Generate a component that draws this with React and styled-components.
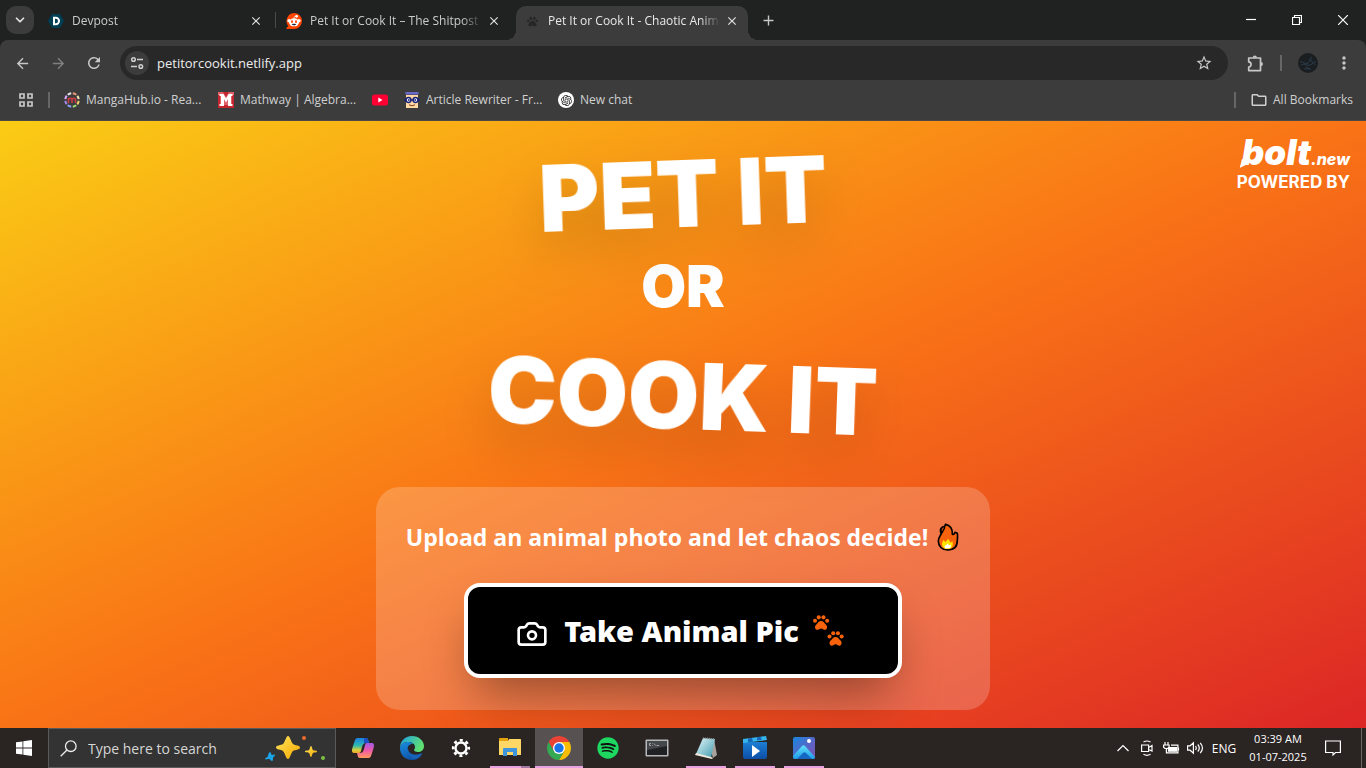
import styled, { createGlobalStyle } from "styled-components"
import {
  MdAdd,
  MdArrowBack,
  MdArrowForward,
  MdClose,
  MdMoreVert,
  MdOutlineFolder,
  MdRefresh,
  MdStarBorder,
} from "react-icons/md"
import { FaPaw, FaSpotify } from "react-icons/fa"
import { RiOpenaiFill } from "react-icons/ri"
import { Camera, ChevronDown } from "lucide-react"

const colors = {
  strip: "#1f2221",
  toolbar: "#3c3c3c",
  omnibox: "#282828",
  icon: "#c7c7c7",
  text: "#e3e3e3",
  divider: "#666666",
  taskbar: "#2a2423",
  underline: "#e7a1e0",
}

const GlobalStyle = createGlobalStyle`
  * {
    box-sizing: border-box;
  }
  body {
    margin: 0;
    font-family: "Open Sans", "Noto Sans", sans-serif;
    font-size: 12px;
  }
  button, input {
    font: inherit;
    color: inherit;
    background: none;
    border: none;
    padding: 0;
    margin: 0;
  }
  a {
    color: inherit;
    text-decoration: none;
  }
  svg {
    display: block;
    flex-shrink: 0;
  }
`

const Screen = styled.div`
  display: flex;
  flex-direction: column;
  min-height: 100vh;
`

/* ---------- browser ---------- */

const TabStrip = styled.div`
  display: flex;
  align-items: flex-end;
  height: 40px;
  padding-left: 6px;
  background: ${colors.strip};
  color: ${colors.text};
`

const TabSearch = styled.button`
  display: flex;
  align-items: center;
  justify-content: center;
  width: 28px;
  height: 28px;
  margin: 0 6px 6px 0;
  border-radius: 10px;
  background: ${colors.toolbar};
`

const TabItem = styled.div`
  position: relative;
  display: flex;
  align-items: center;
  width: 232px;
  height: 34px;
  padding: 0 8px 4px;
  border-radius: 10px 10px 0 0;
  background: ${(props) => (props.$active ? colors.toolbar : "transparent")};

  &::before,
  &::after {
    content: "";
    display: ${(props) => (props.$active ? "block" : "none")};
    position: absolute;
    bottom: 0;
    width: 10px;
    height: 10px;
  }
  &::before {
    left: -10px;
    background: radial-gradient(circle at 0 0, transparent 10px, ${colors.toolbar} 10px);
  }
  &::after {
    right: -10px;
    background: radial-gradient(circle at 100% 0, transparent 10px, ${colors.toolbar} 10px);
  }
`

const Favicon = styled.span`
  display: flex;
  align-items: center;
  justify-content: center;
  width: 16px;
  height: 16px;
`

const TabTitle = styled.span`
  flex: 1;
  margin: 0 4px 0 8px;
  line-height: 20px;
  white-space: nowrap;
  overflow: hidden;
  color: ${(props) => (props.$active ? "#e8e8e8" : "#c9cbca")};
  mask-image: linear-gradient(to right, #000 calc(100% - 20px), transparent);
`

const TabClose = styled.button`
  display: flex;
  align-items: center;
  justify-content: center;
  width: 16px;
  height: 16px;
`

const TabGap = styled.span`
  display: flex;
  justify-content: center;
  align-items: center;
  width: 6px;
  height: 40px;

  &::before {
    content: "";
    width: 1px;
    height: 16px;
    background: ${(props) => (props.$line ? "#4a4c4b" : "transparent")};
  }
`

const NewTab = styled.button`
  display: flex;
  align-items: center;
  justify-content: center;
  width: 28px;
  height: 28px;
  margin: 0 0 6px 6px;
  color: ${colors.icon};
`

const WindowButtons = styled.div`
  display: flex;
  margin-left: auto;
  height: 40px;
`

const WindowButton = styled.button`
  display: flex;
  align-items: center;
  justify-content: center;
  width: 46px;
  color: #fff;
`

const ToolbarWrap = styled.div`
  background: ${colors.strip};
`

const Toolbar = styled.div`
  display: flex;
  align-items: center;
  height: 46px;
  padding: 0 8px;
  border-radius: 8px 8px 0 0;
  background: ${colors.toolbar};
  color: ${colors.icon};
`

const ToolButton = styled.button`
  display: flex;
  align-items: center;
  justify-content: center;
  width: 28px;
  height: 28px;
  margin-right: ${(props) => props.$gap ?? 8}px;
  color: ${(props) => (props.$dim ? "#808080" : colors.icon)};
`

const Omnibox = styled.div`
  flex: 1;
  display: flex;
  align-items: center;
  height: 34px;
  margin: 0 12px 0 4px;
  padding: 0 10px 0 5px;
  border-radius: 17px;
  background: ${colors.omnibox};
`

const SiteInfo = styled.button`
  display: flex;
  align-items: center;
  justify-content: center;
  width: 24px;
  height: 24px;
  border-radius: 50%;
  background: ${colors.toolbar};
`

const UrlInput = styled.input`
  flex: 1;
  min-width: 0;
  margin: 0 8px;
  font-size: 13px;
  color: #ececec;
  outline: none;
`

const Divider = styled.span`
  width: 2px;
  height: 16px;
  background: ${colors.divider};
`

const Profile = styled.button`
  margin: 0 12px 0 16px;
`

const BookmarkBar = styled.nav`
  display: flex;
  align-items: center;
  height: 35px;
  padding: 0 13px 6px 18px;
  border-bottom: 1px solid #4b4845;
  background: ${colors.toolbar};
  color: #cfd0d0;
`

const BookmarkList = styled.div`
  flex: 1;
  display: flex;
  margin-left: 14px;
  min-width: 0;
  overflow: hidden;
`

const BookmarkLink = styled.a`
  display: flex;
  align-items: center;
  gap: 6px;
  margin-right: ${(props) => props.$gap ?? 20}px;
  white-space: nowrap;
`

const BookmarkLabel = styled.span`
  width: 112px;
  line-height: 20px;
`

const AllBookmarks = styled.button`
  display: flex;
  align-items: center;
  gap: 5px;
  margin-left: 14px;
  line-height: 20px;
`

const AppsButton = styled.button`
  margin-right: 14px;
`

/* ---------- web page ---------- */

const Page = styled.main`
  position: relative;
  flex: 1;
  display: flex;
  flex-direction: column;
  align-items: center;
  padding: 25px 16px 18px;
  overflow: hidden;
  background: linear-gradient(to bottom right, #facc15, #f97316, #dc2626);
  color: #fff;
`

const Title = styled.h1`
  display: flex;
  flex-direction: column;
  align-items: center;
  margin: 0 0 43px;
  font-family: Inter, "Open Sans", sans-serif;
  font-weight: 900;
  font-size: 92px;
  line-height: 96px;
`

const TitleLine = styled.span`
  transform: rotate(${(props) => props.$angle}deg);
  filter: drop-shadow(0 25px 25px rgba(0, 0, 0, 0.15));
`

const TitleOr = styled.span`
  margin: 14px 0 32px;
  font-size: 58px;
  line-height: 60px;
`

const Card = styled.section`
  display: flex;
  flex-direction: column;
  align-items: center;
  gap: 28px;
  width: 100%;
  max-width: 614px;
  padding: 32px;
  border-radius: 24px;
  background: rgba(255, 255, 255, 0.2);
`

const CardText = styled.p`
  display: flex;
  align-items: center;
  gap: 8px;
  margin: 0;
  font-size: 23px;
  line-height: 36px;
  font-weight: 700;
  white-space: nowrap;
`

const UploadButton = styled.button`
  display: flex;
  align-items: flex-end;
  padding: 24px 54px 24px 48px;
  border: 4px solid #fff;
  border-radius: 16px;
  background: #000;
  box-shadow: 0 25px 50px -12px rgba(0, 0, 0, 0.4);
  font-family: "Noto Sans", "Open Sans", sans-serif;
  font-size: 29px;
  line-height: 39px;
  font-weight: 900;
  white-space: nowrap;
`

const UploadLabel = styled.span`
  margin: 0 14px 0 16px;
`

const BoltBadge = styled.a`
  position: absolute;
  top: 15px;
  right: 16px;
  display: flex;
  flex-direction: column;
  align-items: flex-end;
  gap: 4px;
  font-family: Inter, "Open Sans", sans-serif;
  font-weight: 700;
  font-size: 17px;
  line-height: 20px;
`

const BoltLogo = styled.span`
  position: relative;
  display: flex;
  align-items: baseline;
  height: 32px;
  font-style: italic;
  font-weight: 900;
  font-size: 35px;
  line-height: 32px;

  /* pointed foot of the b */
  &::before {
    content: "";
    position: absolute;
    left: -2px;
    bottom: 0;
    width: 11px;
    height: 9px;
    background: #fff;
    clip-path: polygon(20% 0, 100% 40%, 0 100%);
  }
`

const BoltSuffix = styled.span`
  font-size: 16px;
  font-weight: 800;
`

/* ---------- taskbar ---------- */

const Taskbar = styled.footer`
  display: flex;
  height: 40px;
  background: ${colors.taskbar};
  color: #fff;
`

const StartButton = styled.button`
  display: flex;
  align-items: center;
  justify-content: center;
  width: 48px;
`

const SearchBox = styled.label`
  display: flex;
  align-items: center;
  width: 288px;
  margin-right: 3px;
  padding: 0 8px 0 11px;
  border: 1px solid #5c5a59;
  background: #333333;
`

const SearchInput = styled.input`
  flex: 1;
  min-width: 0;
  margin-left: 11px;
  font-size: 14px;
  outline: none;

  &::placeholder {
    color: #d6d6d6;
    opacity: 1;
  }
`

const TaskButton = styled.button`
  display: flex;
  flex-direction: column;
  align-items: center;
  width: 48px;
  margin-right: 1px;
  padding-top: 8px;
  background: ${(props) => (props.$active ? "#575251" : "transparent")};

  &::after {
    content: "";
    width: ${(props) => (props.$active ? 48 : 40)}px;
    height: 2px;
    margin-top: auto;
    background: ${(props) =>
      props.$stacked
        ? `linear-gradient(to right, ${colors.underline} 31px, #a477a0 31px)`
        : props.$open
          ? colors.underline
          : "transparent"};
  }
`

const Tray = styled.div`
  display: flex;
  align-items: center;
  margin-left: auto;
  padding-right: 4px;
`

const TrayButton = styled.button`
  display: flex;
  align-items: center;
  justify-content: center;
  width: ${(props) => props.$width ?? 24}px;
  height: 40px;
`

const Clock = styled.time`
  width: 74px;
  font-size: 11px;
  line-height: 18px;
  text-align: center;
`

const ShowDesktop = styled.button`
  width: 1px;
  height: 40px;
  margin-left: 10px;
  background: #6b6766;
`

/* ---------- icons ---------- */

const DevpostIcon = () => (
  <svg width="16" height="16" viewBox="0 0 16 16">
    <path d="M4 1h8l4 7-4 7H4L0 8z" fill="#003e54" />
    <path d="M6 4.8h1.8a3.2 3.2 0 0 1 0 6.4H6z" fill="none" stroke="#fff" strokeWidth="2" />
  </svg>
)

const RedditIcon = () => (
  <svg width="16" height="16" viewBox="0 0 48 48">
    <path d="M24 0a24 24 0 1 1 0 48H3c-2 0-3-2-1-4l5-5A24 24 0 0 1 24 0z" fill="#ff4500" />
    <circle cx="9" cy="23" r="5" fill="#fff" />
    <circle cx="39" cy="23" r="5" fill="#fff" />
    <circle cx="32" cy="10" r="4" fill="#fff" />
    <path d="M24 17c0-6 2-8 7-7" fill="none" stroke="#fff" strokeWidth="2.5" />
    <ellipse cx="24" cy="28" rx="15" ry="12" fill="#fff" />
    <ellipse cx="18" cy="26" rx="3" ry="4" fill="#ff4500" />
    <ellipse cx="30" cy="26" rx="3" ry="4" fill="#ff4500" />
    <path d="M17 33q7-2 14 0c-2 5-12 5-14 0z" fill="#223" />
  </svg>
)

const TuneIcon = () => (
  <svg width="14" height="14" viewBox="0 0 14 14" fill="none" stroke="#d0d0d0" strokeWidth="1.5">
    <circle cx="3.5" cy="3.5" r="1.8" />
    <path d="M7 3.5h6M1 10.5h6" />
    <circle cx="10.8" cy="10.5" r="1.8" />
  </svg>
)

const PuzzleIcon = () => (
  <svg width="19" height="19" viewBox="-1 0 18 18">
    <path
      d="M2.500 3.800h11.200v11.900H2.500v-3.400c3-.3 3-4.500 0-4.800z"
      fill="none"
      stroke={colors.icon}
      strokeWidth="1.6"
      strokeLinejoin="round"
    />
    <path d="M6.300 3.500a2 2 0 0 1 4 0zM14 7.500a2 2 0 0 1 0 4z" fill={colors.icon} />
  </svg>
)

const ProfileIcon = () => (
  <svg width="20" height="20" viewBox="0 0 20 20">
    <circle cx="10" cy="10" r="10" fill="#1b1e21" />
    <path
      d="M2 9c3-1 5 3 8 1s1-5 4-6M3 12c4-2 6 1 9 0s4-4 6-3M8 13c1 3 3 2 5 4M13 6c-1 3 3 3 4 6M6 16c2-1 4 1 6-1"
      fill="none"
      stroke="#2f4257"
      strokeWidth="0.8"
    />
  </svg>
)

const AppsIcon = () => (
  <svg width="16" height="16" viewBox="0 0 16 16" fill="none" stroke={colors.icon} strokeWidth="1.7">
    <path d="M2 2h4v4H2zM10 2h4v4h-4zM2 10h4v4H2zM10 10h4v4h-4z" />
  </svg>
)

const MangaIcon = () => (
  <svg width="16" height="16" viewBox="0 0 16 16" fill="none">
    <g strokeWidth="2">
      <path d="M8.800 1.300a7 7 0 0 1 3.500 1.400" stroke="#e9967a" />
      <path d="M13.300 3.800a7 7 0 0 1 1.400 3.400" stroke="#f2e6b0" />
      <path d="M14.700 8.800a7 7 0 0 1-1.400 3.500" stroke="#f0d070" />
      <path d="M12.200 13.300a7 7 0 0 1-3.400 1.400" stroke="#9fe07c" />
      <path d="M7.200 14.700a7 7 0 0 1-3.500-1.400" stroke="#8ea5ff" />
      <path d="M2.700 12.200a7 7 0 0 1-1.400-3.400" stroke="#a48bef" />
      <path d="M1.300 7.200a7 7 0 0 1 1.400-3.500" stroke="#d9a6ff" />
      <path d="M3.800 2.700a7 7 0 0 1 3.400-1.400" stroke="#e6e6e6" />
    </g>
    <path d="M4.500 11V6M4.500 7.500c0-1.800 3.500-1.800 3.500 0V11M8 7.500c0-1.800 3.500-1.800 3.500 0V11" stroke="#d23c46" strokeWidth="1.5" />
  </svg>
)

const MathwayIcon = () => (
  <svg width="16" height="16" viewBox="0 0 16 16">
    <rect width="16" height="16" fill="#c4252f" />
    <path d="M0 0h5l3 5 3-5h5v3h-2v10H2V3H0z" fill="#e06068" />
    <path d="M1.500 2h4L8 6.500 10.500 2h4v2H13v8h1.500v2H10V7L8 10.500 6 7v7H1.500v-2H3V4H1.500z" fill="#fff" />
  </svg>
)

const YoutubeIcon = () => (
  <svg width="16" height="16" viewBox="0 0 16 16">
    <rect y="2.5" width="16" height="11" rx="2.5" fill="#ff0033" />
    <path d="M6.300 5.500v5l4.200-2.500z" fill="#fff" />
  </svg>
)

const RewriterIcon = () => (
  <svg width="16" height="16" viewBox="0 0 16 16">
    <path d="M2 3h12v13H2z" fill="#ffd9a3" />
    <path d="M1.500 0h13v2.500h-13z" fill="#6a68c9" />
    <path d="M0 8h16" stroke="#1b2377" strokeWidth="1.5" />
    <circle cx="4.5" cy="8" r="2.4" fill="#fff" stroke="#1b2377" strokeWidth="1.5" />
    <circle cx="11.5" cy="8" r="2.4" fill="#fff" stroke="#1b2377" strokeWidth="1.5" />
    <circle cx="4.8" cy="8" r="0.9" fill="#1b2377" />
    <circle cx="11.2" cy="8" r="0.9" fill="#1b2377" />
    <path d="M5 12.800q3 2 6 0" fill="none" stroke="#7a3b20" />
  </svg>
)

const ChatIconBox = styled.span`
  display: flex;
  align-items: center;
  justify-content: center;
  width: 16px;
  height: 16px;
  border-radius: 50%;
  background: #fff;
  color: #222;
`

const FlameIcon = () => (
  <svg width="24" height="28" viewBox="0 0 72 84">
    <path
      d="M35 81C18 81 7 70 7 54c0-10 5-14 9-22-3-4-4-12 0-17 4-4 9-1 12-8 0-1-1-2 1-3 12 2 22 14 20 30 5 2 6-3 8-6l7 3c2 8 0 13 0 21 0 18-10 29-29 29z"
      fill="#f7630c"
      stroke="#000"
      strokeWidth="5"
      strokeLinejoin="round"
    />
    <path d="M17 29c-5-9 0-18 8-18 4 6-4 9-6 18z" fill="#c84a08" stroke="#000" strokeWidth="4" />
    <path d="M35 78c-10 0-17-6-17-15 0-5 3-7 4-12l7 6 7-9c5 4 5 8 8 11l5-4c4 14-1 23-14 23z" fill="#fde300" />
    <path d="M27 76c-3-6 1-10 4-9l4-6 3 6 6-2c2 5 0 10-4 11z" fill="#fff" />
  </svg>
)

const PawPrint = ({ x, y }) => (
  <g transform={`translate(${x} ${y})`}>
    <circle cx="6" cy="17" r="6" />
    <circle cx="17" cy="7" r="6" />
    <circle cx="31" cy="7" r="6" />
    <circle cx="42" cy="17" r="6" />
    <path d="M24 18c7 0 9 5 14 10 6 5 5 15-3 16-4 0-6-4-11-4s-7 4-11 4c-8-1-9-11-3-16 5-5 7-10 14-10z" />
  </g>
)

const PawsIcon = () => (
  <svg width="31" height="39" viewBox="0 0 92 92" fill="#f7630c">
    <PawPrint x={0} y={0} />
    <PawPrint x={43} y={47} />
  </svg>
)

const WindowsIcon = () => (
  <svg width="16" height="16" viewBox="0 0 16 16" fill="#fff">
    <path d="M0 2.300 6.500 1.400v6.200H0zM7.300 1.300 16 0v7.600H7.300zM0 8.400h6.500v6.200L0 13.700zM7.300 8.400H16V16l-8.700-1.300z" />
  </svg>
)

const SearchIcon = () => (
  <svg width="17" height="17" viewBox="0 0 17 17" fill="none" stroke="#ececec" strokeWidth="1.3">
    <circle cx="10.8" cy="6.2" r="5.3" />
    <path d="M7 10 .7 16.300" />
  </svg>
)

const SparkleIcon = () => (
  <svg width="62" height="28" viewBox="0 0 62 28">
    <defs>
      <linearGradient id="gold" x1="0" y1="0" x2="1" y2="1">
        <stop offset="0" stopColor="#ffe45c" />
        <stop offset="1" stopColor="#f5a800" />
      </linearGradient>
    </defs>
    <path d="M23 2c2 0 3 6 5 8s7 1 7 3.500-5 2-7 3.500-3 8-5 8-3-6-5-8-7-1-7-3.500 5-2 7-3.500 3-8 5-8z" fill="url(#gold)" />
    <path d="M46 12c1 0 1 3 2 4s4 0 4 1.500-3 .5-4 1.500-1 4-2 4-1-3-2-4-4 0-4-1.500 3-.5 4-1.500 1-4 2-4z" fill="url(#gold)" />
    <path d="M5 18c1 0 1 3 2 3s3-1 3 0-2 2-2 3 0 3-1 3-2-2-3-2-4 1-4 0 3-2 3-3 1-4 2-4z" fill="#1aa5e8" />
    <circle cx="39" cy="4" r="2" fill="#ef6a2e" />
    <circle cx="58" cy="24" r="2" fill="#7dc242" />
  </svg>
)

const CopilotIcon = () => (
  <svg width="24" height="24" viewBox="0 0 24 24">
    <defs>
      <linearGradient id="copilotA" x1="0" y1="0" x2="0" y2="1">
        <stop offset="0" stopColor="#1a7fe0" />
        <stop offset="0.5" stopColor="#2eb8b0" />
        <stop offset="0.8" stopColor="#d8d13c" />
        <stop offset="1" stopColor="#f5a32a" />
      </linearGradient>
      <linearGradient id="copilotB" x1="0" y1="0" x2="0" y2="1">
        <stop offset="0" stopColor="#a05ae8" />
        <stop offset="0.5" stopColor="#ef5aa8" />
        <stop offset="1" stopColor="#ff9a5c" />
      </linearGradient>
    </defs>
    <path d="M7 2h8c2 0 2 1 3 5h-3c-2 0-3 1-4 4l-1 4c-1 2-1 2-3 2H3c-3 0-2-4-1-7l2-6c1-2 2-2 3-2z" fill="url(#copilotA)" />
    <path d="M13 2h2c2 0 2 1 3 5h-5z" fill="#1c4fc4" />
    <path d="M17 22H9c-2 0-2-1-3-5h3c2 0 3-1 4-4l1-4c1-2 1-2 3-2h4c3 0 2 4 1 7l-2 6c-1 2-2 2-3 2z" fill="url(#copilotB)" />
  </svg>
)

const EdgeIcon = () => (
  <svg width="24" height="24" viewBox="0 0 24 24">
    <defs>
      <linearGradient id="edgeTop" x1="0" y1="0" x2="1" y2="0.4">
        <stop offset="0" stopColor="#1d9fe8" />
        <stop offset="1" stopColor="#5fe070" />
      </linearGradient>
      <linearGradient id="edgeLow" x1="0" y1="0" x2="0.6" y2="1">
        <stop offset="0" stopColor="#1b8fe0" />
        <stop offset="1" stopColor="#0c4fa3" />
      </linearGradient>
    </defs>
    <path d="M0 12C0 5 5 0 12 0s12 5 12 10c0 4-3 6-6 6-2 0-4-1-4-2s1-1 1-3c0-3-3-5-7-5-4 0-7 2-8 6z" fill="url(#edgeTop)" />
    <path d="M0 12c1-4 4-6 8-6 2 0 4 .6 5 1.800C9 8 7 11 8 14c1 4 5 6 9 6 2 0 4-1 5-2-2 4-6 6-10 6C5 24 0 19 0 12z" fill="url(#edgeLow)" />
    <path d="M8.200 13c.3 4 4 6 8.800 5.500 2-.2 4-1 5.500-1.500-2 4-5 6-9 6-4-2-6-6-5.300-10z" fill="#1663b8" />
  </svg>
)

const GearIcon = () => (
  <svg width="24" height="24" viewBox="0 0 24 24" fill="none" stroke="#fff">
    <circle cx="12" cy="12" r="5.5" strokeWidth="2.4" />
    <circle cx="12" cy="12" r="7.8" strokeWidth="2.6" strokeDasharray="3 3.126" strokeDashoffset="1.5" />
  </svg>
)

const ExplorerIcon = () => (
  <svg width="22" height="22" viewBox="0 0 22 22">
    <path d="M0 3c0-1 .5-1 1-1h8v4H0z" fill="#e2a20b" />
    <path d="M0 5h9l1-2h11c1 0 1 .5 1 1v15H0z" fill="#ffd767" />
    <path d="M4 20v-7c0-1 .5-1 1-1h12c1 0 1 .5 1 1v7h-4v-4H8v4z" fill="#3f95dc" />
  </svg>
)

const ChromeIcon = () => (
  <svg width="24" height="24" viewBox="0 0 24 24">
    <path d="M1.610 6A12 12 0 0 1 22.390 6H12L6.800 15z" fill="#ea4335" />
    <path d="M22.390 6A12 12 0 0 1 12 24l5.200-9L12 6z" fill="#fbbc04" />
    <path d="M12 24A12 12 0 0 1 1.610 6l5.190 9L12 18l5.200-3z" fill="#34a853" />
    <circle cx="12" cy="12" r="6" fill="#fff" />
    <circle cx="12" cy="12" r="4.7" fill="#1a73e8" />
  </svg>
)

const SpotifyIcon = styled(FaSpotify)`
  margin-top: 1px;
  color: #1ed760;
  background: radial-gradient(#111 10px, transparent 10px);
`

const TerminalIcon = () => (
  <svg width="24" height="24" viewBox="0 0 24 24">
    <rect x="0.5" y="3.5" width="23" height="17" rx="1" fill="#b5b8ba" />
    <rect x="2" y="5" width="20" height="14" fill="#1f2123" />
    <path d="M2 5h20v5L2 14z" fill="#45484a" />
    <path d="M6 7.500H4.500v2H6M7.500 7.500v.5M7.500 9v.5M9 7.500l1.500 2M11.500 9.500H14" fill="none" stroke="#c9cbcc" strokeWidth="0.7" />
  </svg>
)

const NotepadIcon = () => (
  <svg width="24" height="24" viewBox="0 0 24 24">
    <defs>
      <linearGradient id="note" x1="0" y1="0" x2="1" y2="1">
        <stop offset="0" stopColor="#e6f8fb" />
        <stop offset="1" stopColor="#3c98ac" />
      </linearGradient>
    </defs>
    <path d="M20 3l3 16-4 3-2-7z" fill="#a8a29c" />
    <path d="M9 2l12 1-4 19-15-4z" fill="url(#note)" />
    <path d="M2 17l15 4 2 1-1 1L1 19z" fill="#efe9dd" />
    <path d="M9 2l12 1" stroke="#8f8b86" strokeWidth="1.5" strokeDasharray="1 1" />
  </svg>
)

const MoviesIcon = () => (
  <svg width="24" height="24" viewBox="0 0 24 24">
    <defs>
      <linearGradient id="movie" x1="0" y1="0" x2="0" y2="1">
        <stop offset="0" stopColor="#1c7fd4" />
        <stop offset="1" stopColor="#0d4ea6" />
      </linearGradient>
    </defs>
    <path d="M0 6h24v15c0 1-1 2-2 2H2c-1 0-2-1-2-2z" fill="url(#movie)" />
    <path d="M0 3l23-3 1 4L0 7z" fill="#35b5ee" />
    <path d="M5 2.500l4-.6 1 3.800-5 .6zM14 1.200l4-.5.5 3.300-4.500.6z" fill="#1767b8" />
    <path d="M9 9v12l8-6z" fill="#fff" />
  </svg>
)

const PhotosIcon = () => (
  <svg width="22" height="24" viewBox="0 0 22 24">
    <defs>
      <linearGradient id="photo" x1="0" y1="0" x2="1" y2="1">
        <stop offset="0" stopColor="#1687e0" />
        <stop offset="0.6" stopColor="#5f62c4" />
        <stop offset="1" stopColor="#7a55b0" />
      </linearGradient>
      <linearGradient id="hill" x1="0" y1="0" x2="0" y2="1">
        <stop offset="0" stopColor="#5fe0fa" />
        <stop offset="1" stopColor="#1f9be8" />
      </linearGradient>
    </defs>
    <rect y="1" width="22" height="22" rx="2" fill="url(#photo)" />
    <path d="M0 20 9 10c1-1 2-1 3 0l10 11c0 1-1 2-2 2H2c-1 0-2-1-2-2z" fill="url(#hill)" />
    <path d="M4 23l6-6c1-1 2-1 3 0l6 6z" fill="#1667c4" />
    <circle cx="16" cy="5" r="2" fill="#fff" />
  </svg>
)

const strokeIcon = { fill: "none", stroke: "#fff", strokeWidth: 1.2 }

/* ---------- data ---------- */

const tabs = [
  { title: "Devpost", icon: <DevpostIcon /> },
  { title: "Pet It or Cook It – The Shitpost A", icon: <RedditIcon /> },
  { title: "Pet It or Cook It - Chaotic Anima", icon: <FaPaw size={11} color="#262626" />, active: true },
]

const bookmarks = [
  { label: "MangaHub.io - Rea...", icon: <MangaIcon /> },
  { label: "Mathway | Algebra...", icon: <MathwayIcon /> },
  { name: "YouTube", icon: <YoutubeIcon />, gap: 16 },
  { label: "Article Rewriter - Fr...", icon: <RewriterIcon /> },
  { label: "New chat", icon: <ChatIconBox><RiOpenaiFill size={13} /></ChatIconBox> },
]

const apps = [
  { name: "Copilot", icon: <CopilotIcon /> },
  { name: "Edge", icon: <EdgeIcon /> },
  { name: "Settings", icon: <GearIcon /> },
  { name: "File Explorer", icon: <ExplorerIcon />, open: true, stacked: true },
  { name: "Chrome", icon: <ChromeIcon />, open: true, active: true },
  { name: "Spotify", icon: <SpotifyIcon size={22} /> },
  { name: "Command Prompt", icon: <TerminalIcon /> },
  { name: "Notepad", icon: <NotepadIcon />, open: true },
  { name: "Movies & TV", icon: <MoviesIcon />, open: true },
  { name: "Photos", icon: <PhotosIcon />, open: true },
]

const Tab = (props) => {
  const { tab, index } = props
  return (
    <>
      {index > 0 && <TabGap $line={!tab.active} />}
      <TabItem $active={tab.active}>
        <Favicon>{tab.icon}</Favicon>
        <TabTitle $active={tab.active}>{tab.title}</TabTitle>
        <TabClose aria-label={`Close ${tab.title}`}>
          <MdClose size={14} />
        </TabClose>
      </TabItem>
    </>
  )
}

const BrowserChrome = () => (
  <header>
    <TabStrip>
      <TabSearch aria-label="Search tabs">
        <ChevronDown size={14} strokeWidth={3} />
      </TabSearch>
      {tabs.map((tab, i) => (
        <Tab key={tab.title} tab={tab} index={i} />
      ))}
      <NewTab aria-label="New tab">
        <MdAdd size={17} />
      </NewTab>
      <WindowButtons>
        <WindowButton aria-label="Minimize">
          <svg width="10" height="10" viewBox="0 0 10 10" {...strokeIcon}>
            <path d="M0 4.500h10" />
          </svg>
        </WindowButton>
        <WindowButton aria-label="Restore">
          <svg width="10" height="10" viewBox="0 0 10 10" {...strokeIcon}>
            <path d="M.5 2.500h7v7h-7zM2.500 2.500v-2h7v7h-2" />
          </svg>
        </WindowButton>
        <WindowButton aria-label="Close">
          <svg width="10" height="10" viewBox="0 0 10 10" {...strokeIcon}>
            <path d="M0 0l10 10M10 0 0 10" />
          </svg>
        </WindowButton>
      </WindowButtons>
    </TabStrip>
    <ToolbarWrap>
      <Toolbar>
        <ToolButton aria-label="Back"><MdArrowBack size={17} /></ToolButton>
        <ToolButton aria-label="Forward" $dim><MdArrowForward size={17} /></ToolButton>
        <ToolButton aria-label="Reload"><MdRefresh size={18} /></ToolButton>
        <Omnibox>
          <SiteInfo aria-label="Site information"><TuneIcon /></SiteInfo>
          <UrlInput aria-label="Address" defaultValue="petitorcookit.netlify.app" />
          <ToolButton aria-label="Bookmark this tab" $gap={0}><MdStarBorder size={18} /></ToolButton>
        </Omnibox>
        <ToolButton aria-label="Extensions" $gap={12}><PuzzleIcon /></ToolButton>
        <Divider />
        <Profile aria-label="Profile"><ProfileIcon /></Profile>
        <ToolButton aria-label="Menu" $gap={0}><MdMoreVert size={20} /></ToolButton>
      </Toolbar>
    </ToolbarWrap>
    <BookmarkBar>
      <AppsButton aria-label="Apps"><AppsIcon /></AppsButton>
      <Divider />
      <BookmarkList>
        {bookmarks.map((item) => (
          <BookmarkLink key={item.label || item.name} href="#" aria-label={item.name} $gap={item.gap}>
            {item.icon}
            {item.label && <BookmarkLabel>{item.label}</BookmarkLabel>}
          </BookmarkLink>
        ))}
      </BookmarkList>
      <Divider />
      <AllBookmarks>
        <MdOutlineFolder size={18} />
        All Bookmarks
      </AllBookmarks>
    </BookmarkBar>
  </header>
)

const LandingPage = () => (
  <Page>
    <BoltBadge href="#">
      <BoltLogo>
        bolt<BoltSuffix>.new</BoltSuffix>
      </BoltLogo>
      POWERED BY
    </BoltBadge>
    <Title>
      <TitleLine $angle={-2}>PET IT</TitleLine>
      <TitleOr>OR</TitleOr>
      <TitleLine $angle={2}>COOK IT</TitleLine>
    </Title>
    <Card>
      <CardText>
        Upload an animal photo and let chaos decide!
        <FlameIcon />
      </CardText>
      <UploadButton>
        <Camera size={32} />
        <UploadLabel>Take Animal Pic</UploadLabel>
        <PawsIcon />
      </UploadButton>
    </Card>
  </Page>
)

const WindowsTaskbar = () => (
  <Taskbar>
    <StartButton aria-label="Start"><WindowsIcon /></StartButton>
    <SearchBox>
      <SearchIcon />
      <SearchInput aria-label="Search" placeholder="Type here to search" />
      <SparkleIcon />
    </SearchBox>
    {apps.map((app) => (
      <TaskButton key={app.name} aria-label={app.name} $open={app.open} $active={app.active} $stacked={app.stacked}>
        {app.icon}
      </TaskButton>
    ))}
    <Tray>
      <TrayButton aria-label="Show hidden icons">
        <svg width="12" height="8" viewBox="0 0 12 8" {...strokeIcon}>
          <path d="M.5 7 6 1.500 11.500 7" />
        </svg>
      </TrayButton>
      <TrayButton aria-label="Meet now">
        <svg width="12" height="16" viewBox="0 0 12 16" {...strokeIcon}>
          <path d="M.6 5h7v6.500h-7zM7.600 7.500 11 5.500v5.500L7.600 9.500M2.500 2q3.500-2 7 0M2.500 14.300q3.500 2 7 0" />
        </svg>
      </TrayButton>
      <TrayButton aria-label="Battery">
        <svg width="17" height="12" viewBox="0 0 17 12" {...strokeIcon}>
          <path d="M2 0v3M5 0v3M.6 3h5.500v2.200L4.800 6.500H2L.6 5.200zM3.400 6.500v4.300h11.500V3.200H8M15.500 5.500v3" />
          <path d="M5.500 5.500h8v3.700h-8z" fill="#fff" />
        </svg>
      </TrayButton>
      <TrayButton aria-label="Volume">
        <svg width="17" height="14" viewBox="0 0 17 14" {...strokeIcon}>
          <path d="M.6 4.800h2.500l3.300-3v10.400l-3.300-3H.6zM8.500 5q1.500 2 0 4M10.800 3.500q3 3.500 0 7M13.200 1.800q4.500 5.200 0 10.400" />
        </svg>
      </TrayButton>
      <TrayButton aria-label="Language" $width={34}>ENG</TrayButton>
      <Clock>
        <div>03:39 AM</div>
        <div>01-07-2025</div>
      </Clock>
      <TrayButton aria-label="Notifications" $width={36}>
        <svg width="16" height="16" viewBox="0 0 16 16" {...strokeIcon}>
          <path d="M.6 1h14.800v11.500H10.500l-2.500 2.500v-2.500H.6z" />
        </svg>
      </TrayButton>
      <ShowDesktop aria-label="Show desktop" />
    </Tray>
  </Taskbar>
)

const App = () => (
  <Screen>
    <GlobalStyle />
    <BrowserChrome />
    <LandingPage />
    <WindowsTaskbar />
  </Screen>
)

export default App
